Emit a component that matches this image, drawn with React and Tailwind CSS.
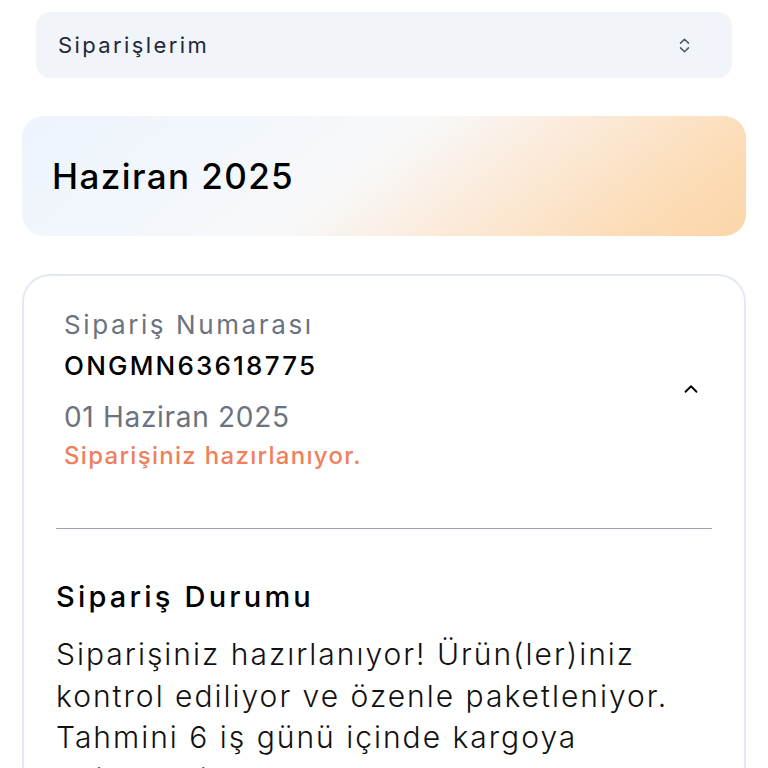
import { ChevronsUpDown, ChevronUp } from "lucide-react";

const font = { fontFamily: "Inter, 'Noto Sans', sans-serif" };

const App = () => {
  return (
    <div className="min-h-screen w-full bg-white px-[22px] pt-3 text-black" style={font}>
      {/* Select */}
      <div className="mx-[14px] h-[66px] rounded-[14px] bg-[#f1f4f9] pl-[22px] pr-[38px] flex items-center justify-between">
        <span className="text-[22px] tracking-[2.4px] text-[#1f2937]">Siparişlerim</span>
        <ChevronsUpDown className="w-[19px] h-[19px] text-[#4b5563]" strokeWidth={1.8} />
      </div>

      {/* Month banner */}
      <div className="mt-[38px] h-[120px] rounded-[22px] bg-[linear-gradient(142deg,#edf4fc_0%,#f3f7fc_30%,#f8f8f8_47%,#fbecde_62%,#fcdcb6_86%,#fbd5a8_100%)] flex items-center pl-[30px]">
        <h1 className="text-[35px] font-medium tracking-[1.4px]">Haziran 2025</h1>
      </div>

      {/* Order card */}
      <div className="mt-[38px] rounded-[28px] border-2 border-[#e3e9f2] px-[32px] pt-[29px] pb-10">
        <div className="flex items-center justify-between pl-[8px] pr-[8px]">
          <div className="flex flex-col">
            <span className="text-[26px] leading-[40px] tracking-[2.6px] text-[#6b7280]">Sipariş Numarası</span>
            <span className="text-[26px] leading-[40px] mt-[1px] font-medium tracking-[2.2px]">ONGMN63618775</span>
            <span className="text-[28px] leading-[44px] mt-[9px] tracking-[0.7px] text-[#6b7280]">01 Haziran 2025</span>
            <span className="text-[24px] leading-[34px] font-medium tracking-[1.3px] text-[#f07f5c]">Siparişiniz hazırlanıyor.</span>
          </div>
          <ChevronUp className="w-[22px] h-[22px] text-black mr-[2px]" strokeWidth={2} />
        </div>

        <div className="mt-[55px] border-t-[1.5px] border-[#9ca3af]" />

        <h2 className="mt-[48px] text-[29px] leading-[40px] font-medium tracking-[3.2px]">Sipariş Durumu</h2>
        <p className="mt-[17px] text-[30px] leading-[41.5px] font-light tracking-[2px] text-[#111]">
          Siparişiniz hazırlanıyor! Ürün(ler)iniz kontrol ediliyor ve özenle paketleniyor. Tahmini 6 iş günü içinde kargoya
          edilecektir.
        </p>
      </div>
    </div>
  );
};

export default App;
